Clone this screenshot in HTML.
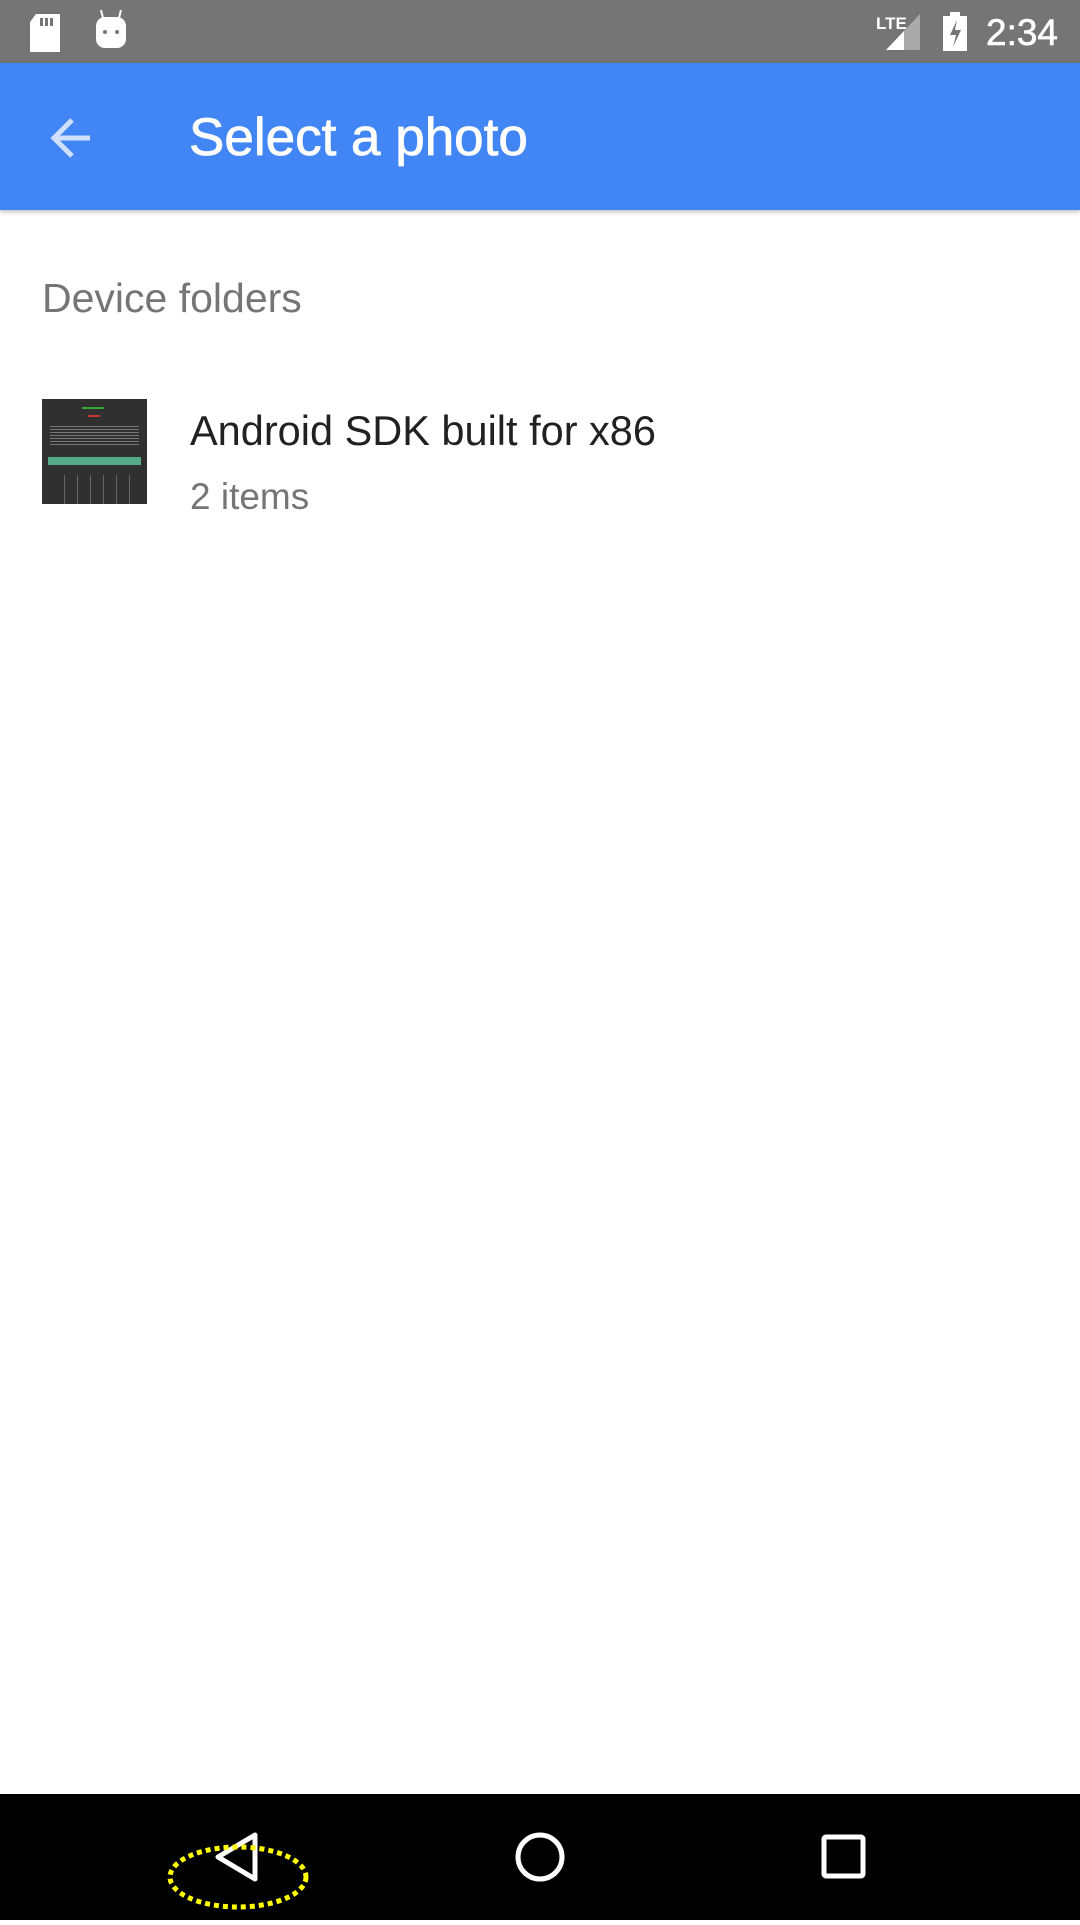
<!DOCTYPE html>
<html><head><meta charset="utf-8"><style>
body{margin:0;width:1080px;height:1920px;position:relative;background:#fff;font-family:"Liberation Sans",sans-serif;overflow:hidden}
.sb{position:absolute;top:0;left:0;width:1080px;height:63px;background:#757575}
.ab{position:absolute;top:63px;left:0;width:1080px;height:147px;background:#4285f4;box-shadow:0 2px 4px rgba(0,0,0,.25)}
.t{position:absolute;color:#fff;font-size:53px;left:189px;line-height:54px;-webkit-text-stroke:0.8px #fff}
.nav{position:absolute;top:1794px;left:0;width:1080px;height:126px;background:#000}
</style></head><body>
<div class="sb">
<svg width="1080" height="63" style="position:absolute;left:0;top:0">
<path d="M36 14h24v38h-30V22z" fill="#fff"/><rect x="40" y="18" width="3" height="8" fill="#757575"/><rect x="45" y="18" width="3" height="8" fill="#757575"/><rect x="50" y="18" width="3" height="8" fill="#757575"/>
<rect x="96" y="17" width="30" height="31" rx="9" fill="#fff"/><line x1="101" y1="10" x2="103" y2="18" stroke="#fff" stroke-width="2"/><line x1="121" y1="10" x2="119" y2="18" stroke="#fff" stroke-width="2"/><circle cx="105" cy="32" r="2" fill="#757575"/><circle cx="117" cy="32" r="2" fill="#757575"/>
<text x="876" y="29" fill="#fff" font-size="17" font-weight="bold" font-family="Liberation Sans Narrow, Liberation Sans">LTE</text>
<path d="M886 50L920 14V50z" fill="#aaa"/><path d="M886 50L904 31V50z" fill="#fff"/>
<rect x="943" y="16" width="24" height="35" fill="#fff"/><rect x="950" y="12" width="10" height="5" fill="#fff"/><path d="M957 20l-7 15h6l-3 12 8-17h-6z" fill="#757575"/>
<text x="986" y="45" fill="#fff" font-size="37" stroke="#fff" stroke-width="0.6">2:34</text>
</svg></div>
<div class="ab">
<svg width="60" height="60" style="position:absolute;left:44px;top:45px"><path d="M46 30H10M28 12L10 30l18 18" stroke="#cfe0fd" stroke-width="5" fill="none"/></svg>
<div class="t" style="top:48px">Select a photo</div>
</div>
<div style="position:absolute;left:42px;top:275px;font-size:41px;color:#757575">Device folders</div>
<div style="position:absolute;left:42px;top:399px;width:105px;height:105px;background:#303030">
<div style="position:absolute;left:40px;top:8px;width:22px;height:2px;background:#3a3"></div>
<div style="position:absolute;left:46px;top:16px;width:12px;height:2px;background:#c33"></div>
<div style="position:absolute;left:8px;top:25px;width:89px;height:22px;background:repeating-linear-gradient(#303030 0 2px,#777 2px 3px)"></div>
<div style="position:absolute;left:6px;top:58px;width:93px;height:8px;background:#5a8"></div>
<div style="position:absolute;left:10px;top:76px;width:88px;height:29px;background:repeating-linear-gradient(90deg,#303030 0 12px,#666 12px 13px)"></div>
</div>
<div style="position:absolute;left:190px;top:407px;font-size:41.5px;color:#212121">Android SDK built for x86</div>
<div style="position:absolute;left:190px;top:476px;font-size:37px;color:#757575">2 items</div>
<div class="nav">
<svg width="1080" height="126">
<path d="M255 41L218 63l37 22z" stroke="#fff" stroke-width="5" fill="none" stroke-linejoin="round"/>
<ellipse cx="238" cy="83" rx="68" ry="30" fill="none" stroke="#ff0" stroke-width="5" stroke-dasharray="5 4"/>
<circle cx="540" cy="63" r="22" stroke="#fff" stroke-width="5" fill="none"/>
<rect x="824" y="43" width="39" height="39" rx="2" stroke="#fff" stroke-width="5" fill="none"/>
</svg></div>
</body></html>
